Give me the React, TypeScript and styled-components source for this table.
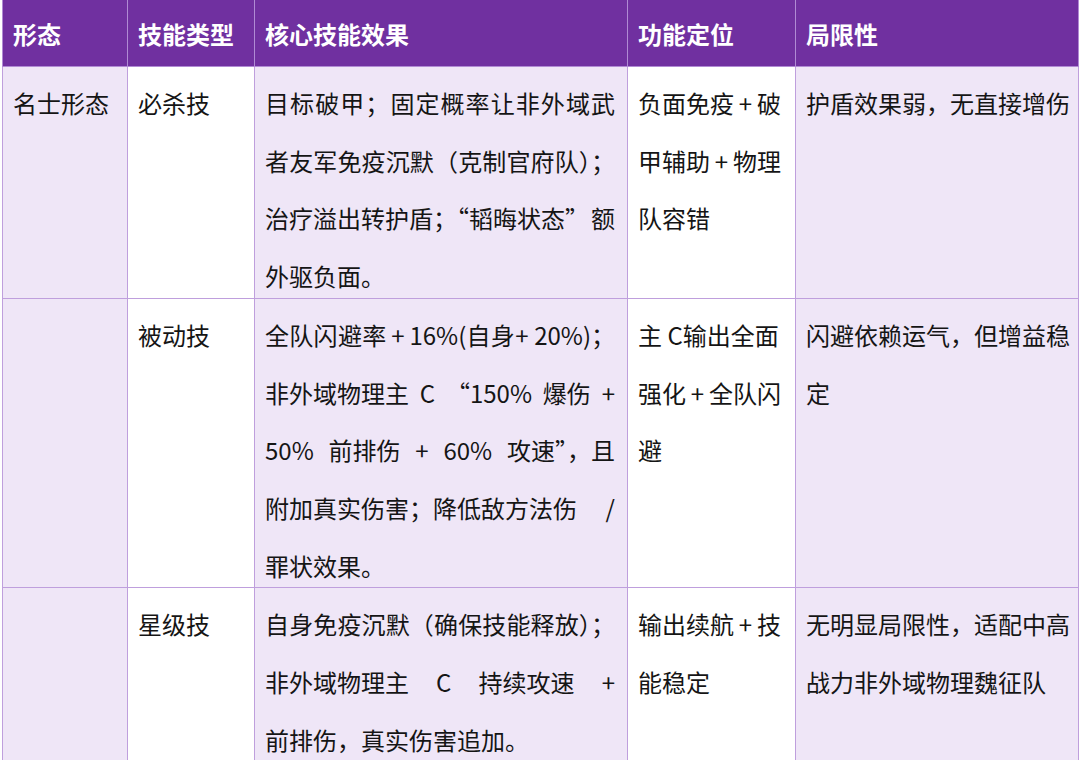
import React from 'react'
import styled, { createGlobalStyle } from 'styled-components'

const GlobalStyle = createGlobalStyle`
  html, body {
    margin: 0;
    padding: 0;
    background: #ffffff;
  }
  body {
    font-family: "Noto Sans CJK SC", "Noto Sans", "Liberation Sans", sans-serif;
    color: #151515;
  }
`

const Table = styled.table`
  width: 1076px;
  margin-left: 2px;
  border-collapse: collapse;
  table-layout: fixed;
`

const HeadCell = styled.th`
  height: 66px;
  padding: 0 12px 0 10px;
  background: #7030a0;
  border: 1px solid #b08ad4;
  border-top: none;
  color: #ffffff;
  font-size: 24px;
  font-weight: 700;
  text-align: left;
  white-space: nowrap;
`

const Cell = styled.td<{ $shaded?: boolean }>`
  padding: 0 12px 0 10px;
  vertical-align: top;
  background: ${(p) => (p.$shaded ? '#efe6f7' : '#ffffff')};
  border: 1px solid #bf9fdd;
  font-size: 24px;
  line-height: 57.7px;
`

const Lines = styled.div`
  padding-top: 7px;
  margin-bottom: -7px;
`

const Line = styled.div<{ $justify?: boolean }>`
  white-space: nowrap;
  text-align: ${(p) => (p.$justify ? 'justify' : 'left')};
  text-align-last: ${(p) => (p.$justify ? 'justify' : 'auto')};
`

// lines with spaces stretch only at the spaces, like the word processor does
const SpreadLine = styled.div`
  display: flex;
  justify-content: space-between;
  white-space: nowrap;
`

interface Row {
  form: string[]
  type: string[]
  effect: string[]
  role: string[]
  limit: string[]
}

const columns = ['形态', '技能类型', '核心技能效果', '功能定位', '局限性']
const widths = [125, 127, 373, 168, 283]

const plus = '\u2009+\u2009'

const rows: Row[] = [
  {
    form: ['名士形态'],
    type: ['必杀技'],
    effect: [
      '目标破甲；固定概率让非外域武',
      '者友军免疫沉默（克制官府队）；',
      '治疗溢出转护盾；“韬晦状态” 额',
      '外驱负面。',
    ],
    role: [`负面免疫${plus}破`, `甲辅助${plus}物理`, '队容错'],
    limit: ['护盾效果弱，无直接增伤'],
  },
  {
    form: [],
    type: ['被动技'],
    effect: [
      `全队闪避率${plus}16%(自身+\u00a020%)；`,
      '非外域物理主 C “150% 爆伤 +',
      '50% 前排伤 + 60% 攻速”，且',
      '附加真实伤害；降低敌方法伤 /',
      '罪状效果。',
    ],
    role: ['主 C输出全面', `强化${plus}全队闪`, '避'],
    limit: ['闪避依赖运气，但增益稳', '定'],
  },
  {
    form: [],
    type: ['星级技'],
    effect: [
      '自身免疫沉默（确保技能释放）；',
      '非外域物理主 C 持续攻速 +',
      '前排伤，真实伤害追加。',
    ],
    role: [`输出续航${plus}技`, '能稳定'],
    limit: ['无明显局限性，适配中高', '战力非外域物理魏征队'],
  },
]

const TextBlock: React.FC<{ lines: string[]; justify?: boolean }> = ({ lines, justify }) => (
  <Lines>
    {lines.map((l, i) => {
      const stretch = justify && i < lines.length - 1
      if (stretch && l.includes(' ')) {
        return (
          <SpreadLine key={i}>
            {l.split(' ').map((w, j) => (
              <span key={j}>{w}</span>
            ))}
          </SpreadLine>
        )
      }
      return (
        <Line key={i} $justify={stretch}>
          {l}
        </Line>
      )
    })}
  </Lines>
)

export default function App() {
  return (
    <>
      <GlobalStyle />
      <Table>
        <colgroup>
          {widths.map((w, i) => (
            <col key={i} style={{ width: w }} />
          ))}
        </colgroup>
        <thead>
          <tr>
            {columns.map((c) => (
              <HeadCell key={c}>{c}</HeadCell>
            ))}
          </tr>
        </thead>
        <tbody>
          {rows.map((r, i) => (
            <tr key={i}>
              <Cell $shaded>
                <TextBlock lines={r.form} />
              </Cell>
              <Cell>
                <TextBlock lines={r.type} />
              </Cell>
              <Cell $shaded>
                <TextBlock lines={r.effect} justify />
              </Cell>
              <Cell>
                <TextBlock lines={r.role} />
              </Cell>
              <Cell $shaded>
                <TextBlock lines={r.limit} />
              </Cell>
            </tr>
          ))}
        </tbody>
      </Table>
    </>
  )
}
